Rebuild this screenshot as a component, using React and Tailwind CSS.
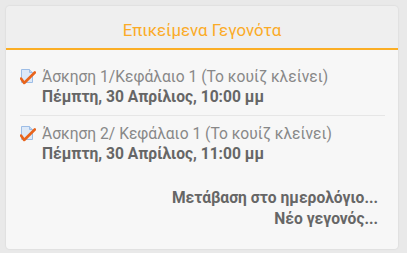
import React from "react";

function QuizIcon() {
  return (
    <svg width="16" height="17" viewBox="0 0 16 17" className="shrink-0 -mt-[1px]">
      <path d="M1.5 1.5 H9.5 L12.5 4.5 V14.5 H1.5 Z" fill="#dde9f8" stroke="#9dbde6" strokeWidth="1" />
      <path d="M9.5 1.5 V4.5 H12.5" fill="#c5d9f2" stroke="#9dbde6" strokeWidth="1" />
      <path d="M1 10.5 L4.2 15 L14.8 4.5" fill="none" stroke="#e8641c" strokeWidth="2.6" strokeLinecap="round" strokeLinejoin="round" />
    </svg>
  );
}

function Item({ title, date }) {
  return (
    <div className="flex flex-col">
      <div className="flex items-center gap-[6px] text-[15.6px] leading-[20px] text-[#888]">
        <QuizIcon />
        <span>{title}</span>
      </div>
      <div className="pl-[22px] text-[15.6px] leading-[20px] font-bold text-[#666]">{date}</div>
    </div>
  );
}

export default function App() {
  return (
    <div className="w-[407px] h-[253px] bg-[#e9e9e9] p-[6px] pr-[9px] pb-[4px] font-['Roboto','Noto_Sans',sans-serif]">
      <div className="h-full rounded-[4px] overflow-hidden flex flex-col shadow-[0_0_2px_rgba(0,0,0,0.12)]">
        <div className="h-[44px] shrink-0 bg-[#efefef] border-b-2 border-[#fbae25] flex items-center justify-center pt-[5px]">
          <span className="text-[16.8px] leading-[20px] text-[#fbab27]">Επικείμενα Γεγονότα</span>
        </div>
        <div className="flex-1 bg-[#f7f7f7] pt-[17px] pl-[14px] pr-[13px]">
          <Item title="Άσκηση 1/Κεφάλαιο 1 (Το κουίζ κλείνει)" date="Πέμπτη, 30 Απρίλιος, 10:00 μμ" />
          <div className="h-px bg-[#e6e6e6] mt-[8px] mb-[8px]" />
          <Item title="Άσκηση 2/ Κεφάλαιο 1 (Το κουίζ κλείνει)" date="Πέμπτη, 30 Απρίλιος, 11:00 μμ" />
          <div className="flex flex-col items-end mt-[24px] pr-[7px] text-[15.6px] leading-[21px] font-bold text-[#666]">
            <span>Μετάβαση στο ημερολόγιο...</span>
            <span>Νέο γεγονός...</span>
          </div>
        </div>
      </div>
    </div>
  );
}
